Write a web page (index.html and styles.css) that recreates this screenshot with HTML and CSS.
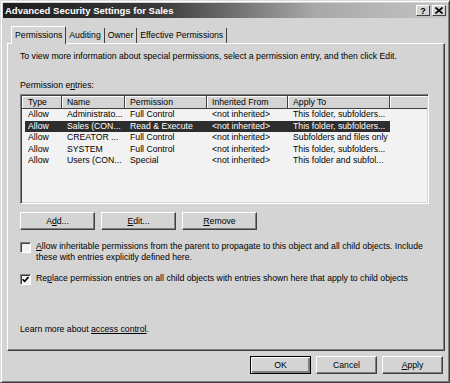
FILE: index.html
```html
<!DOCTYPE html>
<html lang="en">
<head>
  <meta charset="UTF-8" />
  <title>Advanced Security Settings for Sales</title>
  <link rel="stylesheet" href="styles.css">
</head>
<body>
  <div class="window">
    <div class="titlebar">
      <span class="title">Advanced Security Settings for Sales</span>
      <div class="caption-btns">
        <span class="cap">?</span>
        <span class="cap">
          <svg width="8" height="7" viewBox="0 0 8 7"><path d="M0.5 0.5 L7.5 6.5 M7.5 0.5 L0.5 6.5" stroke="#000" stroke-width="1.6"/></svg>
        </span>
      </div>
    </div>

    <div class="tabs">
      <div class="tab active">Permissions</div>
      <div class="tab">Auditing</div>
      <div class="tab">Owner</div>
      <div class="tab">Effective Permissions</div>
    </div>

    <div class="panel">
      <p class="intro">To view more information about special permissions, select a permission entry, and then click Edit.</p>
      <p class="label">Permission e<u>n</u>tries:</p>

      <div class="listbox">
        <div class="row head">
          <span>Type</span><span>Name</span><span>Permission</span><span>Inherited From</span><span>Apply To</span><span></span>
        </div>
        <div class="row">
          <span>Allow</span><span>Administrato...</span><span>Full Control</span><span>&lt;not inherited&gt;</span><span>This folder, subfolders...</span>
        </div>
        <div class="row selected">
          <span>Allow</span><span>Sales (CON...</span><span>Read &amp; Execute</span><span>&lt;not inherited&gt;</span><span>This folder, subfolders...</span>
        </div>
        <div class="row">
          <span>Allow</span><span>CREATOR ...</span><span>Full Control</span><span>&lt;not inherited&gt;</span><span>Subfolders and files only</span>
        </div>
        <div class="row">
          <span>Allow</span><span>SYSTEM</span><span>Full Control</span><span>&lt;not inherited&gt;</span><span>This folder, subfolders...</span>
        </div>
        <div class="row">
          <span>Allow</span><span>Users (CON...</span><span>Special</span><span>&lt;not inherited&gt;</span><span>This folder and subfol...</span>
        </div>
      </div>

      <div class="list-btns">
        <button class="btn wide">A<u>d</u>d...</button>
        <button class="btn wide"><u>E</u>dit...</button>
        <button class="btn wide"><u>R</u>emove</button>
      </div>

      <div class="check first">
        <span class="box"></span>
        <span class="check-text"><u>A</u>llow inheritable permissions from the parent to propagate to this object and all child objects. Include these with entries explicitly defined here.</span>
      </div>
      <div class="check second">
        <span class="box">
          <svg width="7" height="7" viewBox="0 0 7 7"><path d="M0.5 3.2 L2.6 5.4 L6.5 1" stroke="#000" stroke-width="1.6" fill="none"/></svg>
        </span>
        <span class="check-text">Re<u>p</u>lace permission entries on all child objects with entries shown here that apply to child objects</span>
      </div>

      <p class="learn">Learn more about <a href="#">access control</a>.</p>
    </div>

    <div class="footer">
      <button class="btn default">OK</button>
      <button class="btn">Cancel</button>
      <button class="btn"><u>A</u>pply</button>
    </div>
  </div>
</body>
</html>
```

FILE: styles.css
```css
:root {
  --face: #d4d4d4;
  --light: #ffffff;
  --shadow: #808080;
  --dark: #404040;
  --list: #f2f2f2;
}
body {
  margin: 0;
  padding: 0;
  background-color: var(--face);
  font-family: "Liberation Sans", Arial, sans-serif;
  font-size: 8.7px;
  color: #000;
}
p {
  margin: 0;
  line-height: 11px;
}
.window {
  width: 450px;
  height: 383px;
  box-sizing: border-box;
  border: 1px solid;
  border-color: #dcdcdc var(--dark) var(--dark) #dcdcdc;
  box-shadow: inset 1px 1px var(--light), inset -1px -1px var(--shadow);
  padding: 2px;
  display: flex;
  flex-direction: column;
}
.titlebar {
  height: 15px;
  display: flex;
  align-items: center;
  justify-content: space-between;
  background: linear-gradient(to right, #1e1e1e 0%, #3a3a3a 35%, #a8a8a8 70%, #c4c4c4 100%);
  padding-left: 2px;
}
.title {
  color: #fff;
  font-weight: bold;
  font-size: 9.5px;
}
.caption-btns {
  display: flex;
  gap: 2px;
  margin-right: 1px;
}
.cap {
  width: 14px;
  height: 11px;
  box-sizing: border-box;
  background-color: var(--face);
  border: 1px solid;
  border-color: var(--light) var(--dark) var(--dark) var(--light);
  display: flex;
  align-items: center;
  justify-content: center;
  font-weight: bold;
  font-size: 9px;
}
.tabs {
  display: flex;
  align-items: flex-end;
  height: 17px;
  margin-top: 8px;
  padding-left: 8px;
}
.tab {
  height: 15px;
  line-height: 14px;
  padding: 0 3px;
  border-right: 1px solid var(--dark);
  box-sizing: border-box;
}
.tab.active {
  line-height: 16px;
  border-top: 1px solid var(--light);
  border-left: 1px solid var(--light);
  padding: 0 3px;
  position: relative;
  z-index: 1;
  margin-bottom: -1px;
  background-color: var(--face);
  height: 18px;
}
.panel {
  height: 308px;
  margin: 0 2px 0 4px;
  box-sizing: border-box;
  border: 1px solid;
  border-color: var(--light) var(--dark) var(--dark) var(--light);
  box-shadow: inset -1px -1px var(--shadow);
  padding: 0 12px 0 12px;
}
.intro {
  margin-top: 7px;
}
.label {
  margin-top: 18px;
}
.listbox {
  margin-top: 3px;
  height: 110px;
  width: 409px;
  box-sizing: border-box;
  background-color: var(--list);
  border: 1px solid;
  border-color: var(--shadow) var(--light) var(--light) var(--shadow);
  box-shadow: inset 1px 1px var(--dark), inset -1px -1px var(--face);
  padding: 1px;
}
.row {
  display: grid;
  grid-template-columns: 40px 63px 82px 81px 102px;
  height: 11.5px;
  line-height: 11.5px;
  white-space: nowrap;
}
.row span {
  padding-left: 5px;
  overflow: hidden;
}
.row span:first-child {
  padding-left: 6px;
}
.row.head {
  grid-template-columns: 40px 63px 82px 81px 102px 1fr;
  height: 12px;
  line-height: 12px;
  background-color: var(--face);
  border-bottom: 1px solid var(--dark);
}
.row.head span {
  border-right: 1px solid var(--dark);
  box-shadow: inset 1px 1px var(--light);
}
.row.head span:last-child {
  border-right: none;
}
.row.selected {
  grid-template-columns: 37px 63px 82px 81px 102px;
  background-color: #2e2e2e;
  color: #fff;
  margin-left: 3px;
  width: 365px;
}
.row.selected span:first-child {
  padding-left: 3px;
}
.list-btns {
  display: flex;
  gap: 6px;
  margin-top: 8px;
}
.btn {
  width: 61px;
  height: 18px;
  box-sizing: border-box;
  background-color: var(--face);
  border: 1px solid;
  border-color: var(--light) var(--dark) var(--dark) var(--light);
  box-shadow: inset -1px -1px var(--shadow);
  font-family: inherit;
  font-size: 8.7px;
  padding: 0;
  color: #000;
}
.btn.wide {
  width: 75px;
}
.btn.default {
  border: 1px solid #000;
  box-shadow: inset 1px 1px var(--light), inset -2px -2px var(--shadow), inset -1px -1px var(--dark);
}
.check {
  display: flex;
  gap: 5px;
  align-items: flex-start;
}
.check.first {
  margin-top: 11px;
}
.check.second {
  margin-top: 10px;
}
.check-text {
  line-height: 11px;
}
.box {
  flex: none;
  width: 11px;
  height: 11px;
  margin-top: 1px;
  box-sizing: border-box;
  background-color: var(--list);
  border: 1px solid;
  border-color: var(--shadow) var(--light) var(--light) var(--shadow);
  box-shadow: inset 1px 1px var(--dark);
  display: flex;
  align-items: center;
  justify-content: center;
}
.learn {
  margin-top: 39px;
}
.learn a {
  color: #000;
  text-decoration: underline;
}
.footer {
  display: flex;
  justify-content: flex-end;
  gap: 5px;
  padding: 5px 4px 0 0;
}
```
